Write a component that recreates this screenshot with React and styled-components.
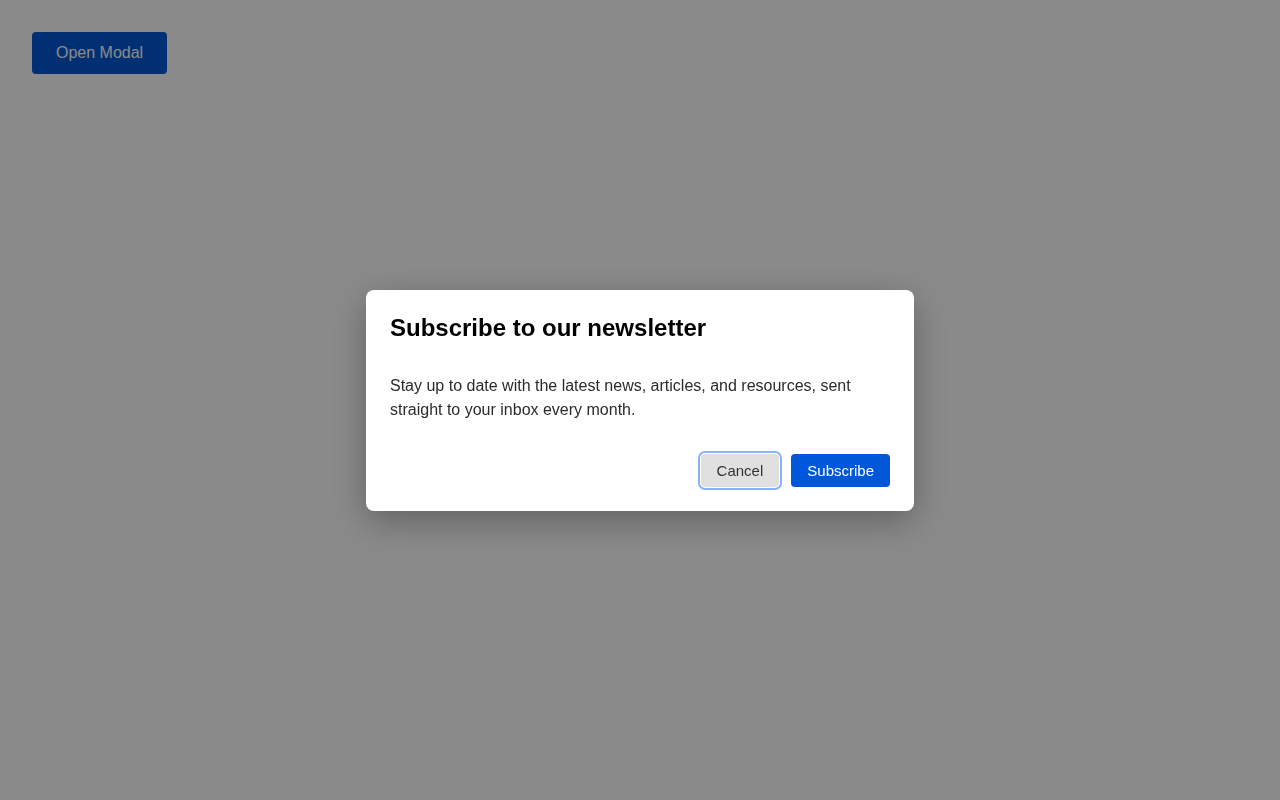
import React from 'react'
import styled, { createGlobalStyle } from 'styled-components'

const GlobalStyle = createGlobalStyle`
    html, body {
        margin: 0;
        padding: 0;
        background: #fff;
        font-family: "Liberation Sans", Arial, sans-serif;
    }
`

const Page = styled.div`
    padding: 32px;
    min-height: 800px;
    box-sizing: border-box;
`

const OpenButton = styled.button`
    font-family: inherit;
    font-size: 16px;
    line-height: 18px;
    color: #fff;
    background: #0057d6;
    border: none;
    border-radius: 4px;
    padding: 12px 24px;
    cursor: pointer;
`

const Overlay = styled.div`
    position: fixed;
    inset: 0;
    background: rgba(0, 0, 0, 0.46);
    display: flex;
    align-items: center;
    justify-content: center;
`

const Dialog = styled.div`
    width: 548px;
    box-sizing: border-box;
    background: #fff;
    border-radius: 8px;
    padding: 24px;
    box-shadow: 0 10px 36px rgba(0, 0, 0, 0.3);
`

const Title = styled.h2`
    margin: 0 0 32px;
    font-size: 24px;
    line-height: 28px;
    font-weight: 700;
    color: #000;
`

const Text = styled.p`
    margin: 0 0 32px;
    font-size: 16px;
    line-height: 24px;
    color: #2b2b2b;
`

const Footer = styled.div`
    display: flex;
    justify-content: flex-end;
    gap: 12px;
`

const Button = styled.button`
    font-family: inherit;
    font-size: 15px;
    line-height: 17px;
    padding: 8px 16px;
    border: none;
    border-radius: 4px;
    cursor: pointer;
    color: ${p => (p.$primary ? '#fff' : '#333')};
    background: ${p => (p.$primary ? '#0057d9' : '#e0e0e0')};
    box-shadow: ${p => (p.$focused ? '0 0 0 1px #fff, 0 0 0 3px #8ab2f7' : 'none')};
`

export default function App() {
    return (
        <>
            <GlobalStyle />
            <Page>
                <OpenButton>Open Modal</OpenButton>
            </Page>
            <Overlay>
                <Dialog role="dialog">
                    <Title>Subscribe to our newsletter</Title>
                    <Text>
                        Stay up to date with the latest news, articles, and resources, sent
                        straight to your inbox every month.
                    </Text>
                    <Footer>
                        <Button $focused>Cancel</Button>
                        <Button $primary>Subscribe</Button>
                    </Footer>
                </Dialog>
            </Overlay>
        </>
    )
}
